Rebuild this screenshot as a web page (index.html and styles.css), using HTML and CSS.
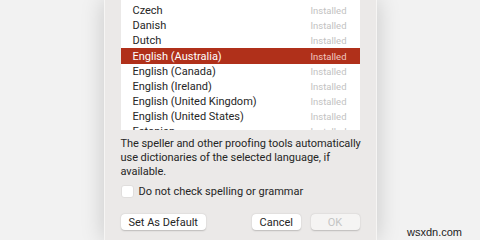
FILE: index.html
```html
<!DOCTYPE html>
<html lang="en">
<head>
    <meta charset="UTF-8">
    <title>Language</title>
    <link rel="stylesheet" href="styles.css">
</head>
<body>
    <div class="dialog">
        <ul class="lang-list">
            <li class="lang-row"><span>Czech</span><span class="status">Installed</span></li>
            <li class="lang-row"><span>Danish</span><span class="status">Installed</span></li>
            <li class="lang-row"><span>Dutch</span><span class="status">Installed</span></li>
            <li class="lang-row selected"><span>English (Australia)</span><span class="status">Installed</span></li>
            <li class="lang-row"><span>English (Canada)</span><span class="status">Installed</span></li>
            <li class="lang-row"><span>English (Ireland)</span><span class="status">Installed</span></li>
            <li class="lang-row"><span>English (United Kingdom)</span><span class="status">Installed</span></li>
            <li class="lang-row"><span>English (United States)</span><span class="status">Installed</span></li>
            <li class="lang-row"><span>Estonian</span><span class="status">Installed</span></li>
        </ul>
        <p class="note">The speller and other proofing tools automatically use dictionaries of the selected language, if available.</p>
        <label class="check"><span class="box"></span>Do not check spelling or grammar</label>
        <div class="buttons">
            <button class="btn" type="button">Set As Default</button>
            <div class="right">
                <button class="btn cancel" type="button">Cancel</button>
                <button class="btn ok" type="button" disabled>OK</button>
            </div>
        </div>
    </div>
    <div class="watermark">wsxdn.com</div>
</body>
</html>
```
FILE: styles.css
```css
/* Page */
body {
    margin: 0;
    height: 240px;
    background-color: #f2f2f2;
    font-family: Roboto, "Noto Sans", sans-serif;
    font-size: 11px;
    color: #262626;
    display: flex;
    justify-content: center;
    overflow: hidden;
}

/* Dialog panel */
.dialog {
    width: 273px;
    box-sizing: border-box;
    padding: 0 16px;
    background-color: #ebe9e8;
    border-left: 1px solid #f6f5f4;
    border-right: 1px solid #f6f5f4;
    box-shadow: 0 0 22px rgba(0, 0, 0, 0.18);
}

/* Language list */
.lang-list {
    list-style: none;
    margin: 0;
    padding: 3px 0 0 0;
    height: 127px;
    overflow: hidden;
    background-color: #fff;
    width: 239px;
}

.lang-row {
    display: flex;
    justify-content: space-between;
    align-items: center;
    height: 15px;
    padding: 0 13px 0 12px;
    color: #262626;
}

.lang-row .status {
    color: #c2c2c2;
    font-size: 9.5px;
}

.lang-row.selected {
    background-color: #b0301a;
    color: #fff;
    height: 16px;
}

.lang-row.selected .status {
    color: #f0c8c0;
}

/* Description */
.note {
    margin: 7px -5px 0 0;
    line-height: 14px;
    letter-spacing: -0.05px;
}

/* Checkbox */
.check {
    display: flex;
    align-items: center;
    gap: 5px;
    margin-top: 6px;
}

.box {
    width: 11px;
    height: 11px;
    border-radius: 3px;
    background-color: #fff;
    border: 1px solid #e0dedd;
}

/* Buttons */
.buttons {
    display: flex;
    justify-content: space-between;
    margin-top: 16px;
}

.right {
    display: flex;
    gap: 10px;
}

.btn {
    font-family: inherit;
    font-size: 11px;
    color: #262626;
    background-color: #fff;
    border: none;
    border-radius: 4px;
    box-shadow: 0 0.5px 1.5px rgba(0, 0, 0, 0.2);
    height: 16px;
    padding: 0 8px;
}

.btn.cancel {
    width: 49px;
}

.btn.ok {
    width: 49px;
    background-color: #f5f4f3;
    color: #c4c4c4;
}

/* Watermark */
.watermark {
    position: absolute;
    left: 407px;
    top: 226px;
    font-family: "Liberation Sans", Arial, sans-serif;
    font-size: 11px;
    color: #222;
}
```
